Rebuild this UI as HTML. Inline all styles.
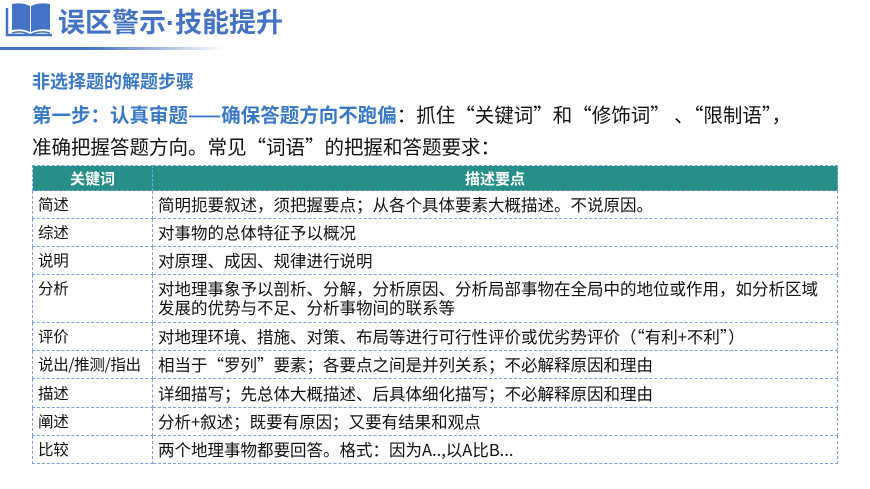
<!DOCTYPE html>
<html><head><meta charset="utf-8"><style>
body{margin:0;width:870px;height:489px;background:#fff;position:relative;overflow:hidden;font-family:"Noto Sans CJK SC","Liberation Sans",sans-serif;}
.t{position:absolute;white-space:nowrap}
table{position:absolute;left:32px;top:165px;width:806px;border-collapse:collapse;font-size:16.5px;color:#111}
td,th{border:1px dashed #7aa3d8;padding:0 0 0 5px;text-align:left;font-weight:normal;line-height:19px;white-space:nowrap}
td:first-child{font-size:15.5px;letter-spacing:-0.3px}
th{background:#268f87;color:#fff;font-weight:bold;text-align:center;height:24px;padding:0;font-size:15px}
</style></head><body>
<svg style="position:absolute;left:4px;top:2px" width="52" height="36" viewBox="0 0 52 36">
<path d="M3 6 V33 H48" stroke="#4472c4" stroke-width="2.5" fill="none"/>
<path d="M8 2 Q18 0 26 4 V30 Q18 26 8 28 Z" fill="#4472c4"/>
<path d="M27 4 Q35 0 46 2 V28 Q35 26 27 30 Z" fill="#4472c4"/>
<path d="M8 31 Q18 28 26 33 Q35 28 46 31" stroke="#4472c4" stroke-width="1.5" fill="none"/>
</svg>
<div class="t" style="left:58px;top:1px;font-size:27px;font-weight:bold;color:#4472c4;line-height:40px">误区警示<span style="font-family:'Liberation Sans',sans-serif">·</span>技能提升</div>
<div style="position:absolute;left:0;top:47px;width:225px;height:3px;background:linear-gradient(90deg,#4472c4,#4472c4 40%,rgba(68,114,196,0))"></div>
<div class="t" style="left:32px;top:68px;font-size:18px;font-weight:bold;color:#3a78c8;line-height:26px">非选择题的解题步骤</div>
<div class="t" style="left:32px;top:100px;font-size:19.5px;color:#111;line-height:28px"><b style="color:#3a78c8">第一步：认真审题——确保答题方向不跑偏</b>：抓住“关键词”和“修饰词” 、“限制语”，</div>
<div class="t" style="left:32px;top:132px;font-size:19.5px;color:#111;line-height:28px">准确把握答题方向。常见“词语”的把握和答题要求：</div>
<table>
<tr><th style="width:119px">关键词</th><th>描述要点</th></tr>
<tr style="height:28px"><td>简述</td><td>简明扼要叙述，须把握要点；从各个具体要素大概描述。不说原因。</td></tr>
<tr style="height:28px"><td>综述</td><td>对事物的总体特征予以概况</td></tr>
<tr style="height:28px"><td>说明</td><td>对原理、成因、规律进行说明</td></tr>
<tr style="height:48px"><td style="vertical-align:top;padding-top:4px">分析</td><td style="vertical-align:top;padding-top:4px">对地理事象予以剖析、分解，分析原因、分析局部事物在全局中的地位或作用，如分析区域<br>发展的优势与不足、分析事物间的联系等</td></tr>
<tr style="height:28px"><td>评价</td><td>对地理环境、措施、对策、布局等进行可行性评价或优劣势评价（“有利+不利”）</td></tr>
<tr style="height:28px"><td>说出/推测/指出</td><td>相当于“罗列”要素；各要点之间是并列关系；不必解释原因和理由</td></tr>
<tr style="height:29px"><td>描述</td><td>详细描写；先总体大概描述、后具体细化描写；不必解释原因和理由</td></tr>
<tr style="height:28px"><td>阐述</td><td>分析+叙述；既要有原因；又要有结果和观点</td></tr>
<tr style="height:28px"><td>比较</td><td>两个地理事物都要回答。格式：因为A..,以A比B...</td></tr>
</table>
</body></html>
